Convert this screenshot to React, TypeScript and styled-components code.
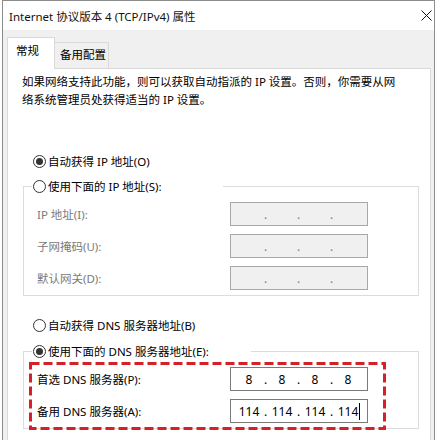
import React from "react";
import styled, { createGlobalStyle } from "styled-components";

const GlobalStyle = createGlobalStyle`
  body {
    margin: 0;
    background: #fff;
    font-family: "Noto Sans", "Noto Sans CJK SC", sans-serif;
    font-size: 11.5px;
    color: #000;
  }
`;

const Window = styled.div`
  margin-left: 2px;
  width: 433px;
  height: 440px;
  box-sizing: border-box;
  border: 1px solid #8c8c8c;
  border-bottom: none;
  background: #f0f0f0;
  overflow: hidden;
`;

const TitleBar = styled.div`
  height: 29px;
  background: #fff;
  display: flex;
  align-items: center;
  justify-content: space-between;
  padding: 0 2px 0 6px;
  font-size: 11.5px;
  color: #111;
`;

const Body = styled.div`
  padding: 8px 3px 0 4px;
`;

const TabBar = styled.div`
  display: flex;
  align-items: flex-end;
  height: 31px;
  position: relative;
  z-index: 1;
  margin-bottom: -1px;
`;

const Tab = styled.div<{ $active?: boolean }>`
  box-sizing: border-box;
  width: ${(p) => (p.$active ? 48 : 54)}px;
  height: ${(p) => (p.$active ? 32 : 27)}px;
  padding: ${(p) => (p.$active ? "4px 0 0 8px" : "3px 0 0 5px")};
  background: ${(p) => (p.$active ? "#fff" : "#f0f0f0")};
  border: 1px solid #d9d9d9;
  border-bottom: ${(p) => (p.$active ? "none" : "1px solid #d9d9d9")};
  border-left: ${(p) => (p.$active ? "1px solid #d9d9d9" : "none")};
  white-space: nowrap;
  font-size: 11.5px;
`;

const Panel = styled.div`
  background: #fff;
  border: 1px solid #d9d9d9;
  height: 380px;
  padding: 4px 12px 0 14px;
`;

const Para = styled.p`
  margin: 0;
  line-height: 18px;
  width: 380px;
`;

const RadioRow = styled.label<{ $top: number }>`
  display: flex;
  align-items: center;
  gap: 2px;
  height: 20px;
  margin: ${(p) => p.$top}px 0 0 11px;
`;

const LegendRadio = styled.label`
  display: flex;
  align-items: center;
  gap: 2px;
  height: 20px;
`;

const Circle = styled.span<{ $checked?: boolean }>`
  box-sizing: border-box;
  width: 13px;
  height: 13px;
  border-radius: 50%;
  border: 1px solid #333;
  background: #fff;
  display: flex;
  align-items: center;
  justify-content: center;
  &::after {
    content: "";
    width: 7px;
    height: 7px;
    border-radius: 50%;
    background: ${(p) => (p.$checked ? "#333" : "transparent")};
  }
`;

const Group = styled.fieldset<{ $top: number }>`
  margin: ${(p) => p.$top}px 0 0 1px;
  width: 396px;
  box-sizing: border-box;
  border: 1px solid #dcdcdc;
  padding: 6px 0 5px 8px;
`;

const Legend = styled.legend<{ $w: number }>`
  padding: 0 0 0 1px;
  width: ${(p) => p.$w}px;
`;

const Rows = styled.div`
  display: flex;
  flex-direction: column;
  gap: 8px;
  margin-left: 5px;
  position: relative;
  width: 331px;
`;

const Row = styled.div<{ $disabled?: boolean }>`
  display: grid;
  grid-template-columns: 193px 138px;
  align-items: center;
  color: ${(p) => (p.$disabled ? "#7a7a7a" : "#000")};
`;

const Field = styled.div<{ $disabled?: boolean }>`
  box-sizing: border-box;
  height: 24px;
  border: 1px solid ${(p) => (p.$disabled ? "#a8a8a8" : "#7a7a7a")};
  background: ${(p) => (p.$disabled ? "#f0f0f0" : "#fff")};
  display: flex;
  align-items: center;
  padding-left: 5px;
  font-size: 12px;
  color: ${(p) => (p.$disabled ? "#7a7a7a" : "#000")};
`;

const Octet = styled.span`
  width: 26px;
  text-align: center;
`;

const Dot = styled.span`
  width: 7px;
  text-align: center;
`;

const Caret = styled.span`
  position: relative;
  &::after {
    content: "";
    position: absolute;
    left: calc(100% + 1px);
    top: 0;
    bottom: 0;
    border-left: 1px solid #000;
  }
`;

const Marker = styled.svg`
  position: absolute;
  left: -8px;
  top: -5px;
  pointer-events: none;
`;

function IpField({ values, disabled, caret }: { values: string[]; disabled?: boolean; caret?: boolean }) {
  return (
    <Field $disabled={disabled}>
      {values.map((v, i) => (
        <React.Fragment key={i}>
          {i > 0 && <Dot>.</Dot>}
          <Octet>{caret && i === values.length - 1 ? <Caret>{v}</Caret> : v}</Octet>
        </React.Fragment>
      ))}
    </Field>
  );
}

function Radio({ checked, label }: { checked?: boolean; label: string }) {
  return (
    <>
      <Circle $checked={checked} />
      <span>{label}</span>
    </>
  );
}

export default function App() {
  const empty = ["", "", "", ""];
  return (
    <>
      <GlobalStyle />
      <Window>
        <TitleBar>
          <span>Internet 协议版本 4 (TCP/IPv4) 属性</span>
          <svg width="11" height="11" viewBox="0 0 11 11">
            <path d="M0.5 0.5 L10.5 10.5 M10.5 0.5 L0.5 10.5" stroke="#111" strokeWidth="1" />
          </svg>
        </TitleBar>
        <Body>
          <TabBar>
            <Tab $active>常规</Tab>
            <Tab>备用配置</Tab>
          </TabBar>
          <Panel>
            <Para>
              如果网络支持此功能，则可以获取自动指派的 IP 设置。否则，你需要从网络系统管理员处获得适当的 IP 设置。
            </Para>
            <RadioRow $top={42}>
              <Radio checked label="自动获得 IP 地址(O)" />
            </RadioRow>
            <Group $top={5}>
              <Legend $w={190}>
                <LegendRadio>
                  <Radio label="使用下面的 IP 地址(S):" />
                </LegendRadio>
              </Legend>
              <Rows>
                <Row $disabled>
                  <span>IP 地址(I):</span>
                  <IpField values={empty} disabled />
                </Row>
                <Row $disabled>
                  <span>子网掩码(U):</span>
                  <IpField values={empty} disabled />
                </Row>
                <Row $disabled>
                  <span>默认网关(D):</span>
                  <IpField values={empty} disabled />
                </Row>
              </Rows>
            </Group>
            <RadioRow $top={19}>
              <Radio label="自动获得 DNS 服务器地址(B)" />
            </RadioRow>
            <Group $top={6}>
              <Legend $w={218}>
                <LegendRadio>
                  <Radio checked label="使用下面的 DNS 服务器地址(E):" />
                </LegendRadio>
              </Legend>
              <Rows>
                <Row>
                  <span>首选 DNS 服务器(P):</span>
                  <IpField values={["8", "8", "8", "8"]} />
                </Row>
                <Row>
                  <span>备用 DNS 服务器(A):</span>
                  <IpField values={["114", "114", "114", "114"]} caret />
                </Row>
                <Marker width="357" height="68" viewBox="0 0 357 68">
                  <rect x="1.5" y="1.5" width="354" height="65" fill="none" stroke="#d42027" strokeWidth="3" strokeDasharray="9 4" />
                </Marker>
              </Rows>
            </Group>
          </Panel>
        </Body>
      </Window>
    </>
  );
}
